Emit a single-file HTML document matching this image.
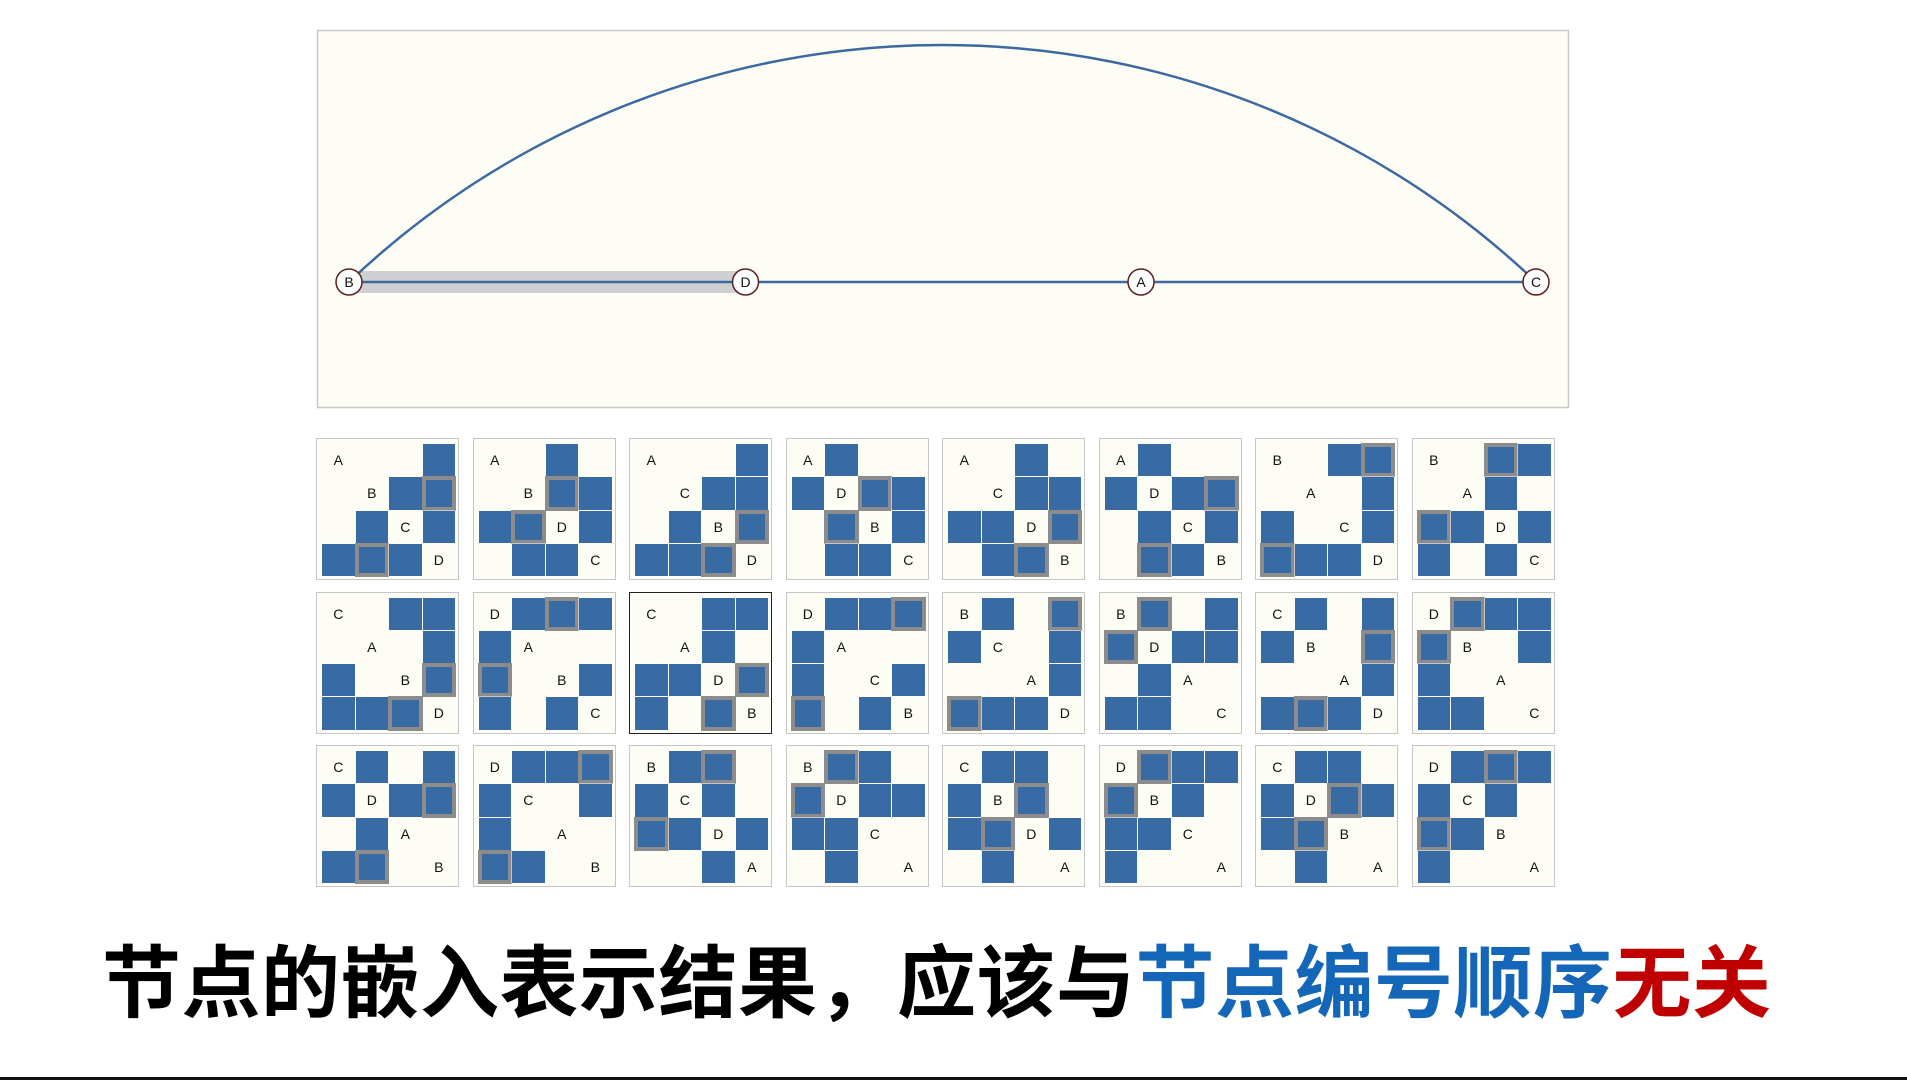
<!DOCTYPE html>
<html><head><meta charset="utf-8"><style>
html,body{margin:0;padding:0;background:#fff;width:1907px;height:1080px;overflow:hidden;position:relative;font-family:"Liberation Sans",sans-serif}
#top{position:absolute;left:0;top:0}
.p{position:absolute;width:143px;height:142px;box-sizing:border-box;border:1px solid #c6c6c6;background:#fdfdf6;padding:5px;display:grid;grid-template-columns:repeat(4,32.5px);grid-template-rows:repeat(4,32.25px);gap:1px}
.p.s{border:1.5px solid #222}
.p i{display:block;position:relative}
.p i.b{background:#386aa4;box-shadow:0 0 0 0.5px #fff}
.p i.g{background:#386aa4;box-shadow:0 0 0 3px #8c8c8c inset;outline:1px solid #8c8c8c}
.p i.l{font-style:normal;font-size:14px;color:#111;display:flex;align-items:center;justify-content:center}
#cap{position:absolute;left:102px;top:938px;font-family:"Liberation Sans","Noto Sans CJK SC",sans-serif;font-weight:700;font-size:79px;line-height:92px;color:#000;white-space:nowrap;letter-spacing:0.5px}
#cap .bl{color:#1466b8}#cap .r{color:#c00000}
#bar{position:absolute;left:0;top:1077px;width:1907px;height:3px;background:#111}
</style></head><body>
<svg id="top" width="1907" height="420">
<rect x="317.5" y="30.5" width="1251" height="377" fill="#fdfdf5" stroke="#c8c8c8" stroke-width="1.5"/>
<rect x="349" y="271" width="397" height="22" fill="#cfcfd1"/>
<path d="M349 282 A861.6 861.6 0 0 1 1536 282" fill="none" stroke="#3c6aa0" stroke-width="2.5"/>
<line x1="349" y1="282" x2="1536" y2="282" stroke="#3c6aa0" stroke-width="2.5"/>
<g fill="#fff" stroke="#5a1f1f" stroke-width="1.5">
<circle cx="349" cy="282" r="13"/><circle cx="745.5" cy="282" r="13"/><circle cx="1141" cy="282" r="13"/><circle cx="1536" cy="282" r="13"/></g>
<g font-family="Liberation Sans" font-size="14" text-anchor="middle" fill="#111">
<text x="349" y="287">B</text><text x="745.5" y="287">D</text><text x="1141" y="287">A</text><text x="1536" y="287">C</text></g>
</svg>

<!-- row 1 -->
<div class="p" style="left:316px;top:438px"><i class="l">A</i><i></i><i></i><i class="b"></i><i></i><i class="l">B</i><i class="b"></i><i class="g"></i><i></i><i class="b"></i><i class="l">C</i><i class="b"></i><i class="b"></i><i class="g"></i><i class="b"></i><i class="l">D</i></div>
<div class="p" style="left:472.5px;top:438px"><i class="l">A</i><i></i><i class="b"></i><i></i><i></i><i class="l">B</i><i class="g"></i><i class="b"></i><i class="b"></i><i class="g"></i><i class="l">D</i><i class="b"></i><i></i><i class="b"></i><i class="b"></i><i class="l">C</i></div>
<div class="p" style="left:629px;top:438px"><i class="l">A</i><i></i><i></i><i class="b"></i><i></i><i class="l">C</i><i class="b"></i><i class="b"></i><i></i><i class="b"></i><i class="l">B</i><i class="g"></i><i class="b"></i><i class="b"></i><i class="g"></i><i class="l">D</i></div>
<div class="p" style="left:785.5px;top:438px"><i class="l">A</i><i class="b"></i><i></i><i></i><i class="b"></i><i class="l">D</i><i class="g"></i><i class="b"></i><i></i><i class="g"></i><i class="l">B</i><i class="b"></i><i></i><i class="b"></i><i class="b"></i><i class="l">C</i></div>
<div class="p" style="left:942px;top:438px"><i class="l">A</i><i></i><i class="b"></i><i></i><i></i><i class="l">C</i><i class="b"></i><i class="b"></i><i class="b"></i><i class="b"></i><i class="l">D</i><i class="g"></i><i></i><i class="b"></i><i class="g"></i><i class="l">B</i></div>
<div class="p" style="left:1098.5px;top:438px"><i class="l">A</i><i class="b"></i><i></i><i></i><i class="b"></i><i class="l">D</i><i class="b"></i><i class="g"></i><i></i><i class="b"></i><i class="l">C</i><i class="b"></i><i></i><i class="g"></i><i class="b"></i><i class="l">B</i></div>
<div class="p" style="left:1255px;top:438px"><i class="l">B</i><i></i><i class="b"></i><i class="g"></i><i></i><i class="l">A</i><i></i><i class="b"></i><i class="b"></i><i></i><i class="l">C</i><i class="b"></i><i class="g"></i><i class="b"></i><i class="b"></i><i class="l">D</i></div>
<div class="p" style="left:1411.5px;top:438px"><i class="l">B</i><i></i><i class="g"></i><i class="b"></i><i></i><i class="l">A</i><i class="b"></i><i></i><i class="g"></i><i class="b"></i><i class="l">D</i><i class="b"></i><i class="b"></i><i></i><i class="b"></i><i class="l">C</i></div>

<!-- row 2 -->
<div class="p" style="left:316px;top:591.5px"><i class="l">C</i><i></i><i class="b"></i><i class="b"></i><i></i><i class="l">A</i><i></i><i class="b"></i><i class="b"></i><i></i><i class="l">B</i><i class="g"></i><i class="b"></i><i class="b"></i><i class="g"></i><i class="l">D</i></div>
<div class="p" style="left:472.5px;top:591.5px"><i class="l">D</i><i class="b"></i><i class="g"></i><i class="b"></i><i class="b"></i><i class="l">A</i><i></i><i></i><i class="g"></i><i></i><i class="l">B</i><i class="b"></i><i class="b"></i><i></i><i class="b"></i><i class="l">C</i></div>
<div class="p s" style="left:629px;top:591.5px"><i class="l">C</i><i></i><i class="b"></i><i class="b"></i><i></i><i class="l">A</i><i class="b"></i><i></i><i class="b"></i><i class="b"></i><i class="l">D</i><i class="g"></i><i class="b"></i><i></i><i class="g"></i><i class="l">B</i></div>
<div class="p" style="left:785.5px;top:591.5px"><i class="l">D</i><i class="b"></i><i class="b"></i><i class="g"></i><i class="b"></i><i class="l">A</i><i></i><i></i><i class="b"></i><i></i><i class="l">C</i><i class="b"></i><i class="g"></i><i></i><i class="b"></i><i class="l">B</i></div>
<div class="p" style="left:942px;top:591.5px"><i class="l">B</i><i class="b"></i><i></i><i class="g"></i><i class="b"></i><i class="l">C</i><i></i><i class="b"></i><i></i><i></i><i class="l">A</i><i class="b"></i><i class="g"></i><i class="b"></i><i class="b"></i><i class="l">D</i></div>
<div class="p" style="left:1098.5px;top:591.5px"><i class="l">B</i><i class="g"></i><i></i><i class="b"></i><i class="g"></i><i class="l">D</i><i class="b"></i><i class="b"></i><i></i><i class="b"></i><i class="l">A</i><i></i><i class="b"></i><i class="b"></i><i></i><i class="l">C</i></div>
<div class="p" style="left:1255px;top:591.5px"><i class="l">C</i><i class="b"></i><i></i><i class="b"></i><i class="b"></i><i class="l">B</i><i></i><i class="g"></i><i></i><i></i><i class="l">A</i><i class="b"></i><i class="b"></i><i class="g"></i><i class="b"></i><i class="l">D</i></div>
<div class="p" style="left:1411.5px;top:591.5px"><i class="l">D</i><i class="g"></i><i class="b"></i><i class="b"></i><i class="g"></i><i class="l">B</i><i></i><i class="b"></i><i class="b"></i><i></i><i class="l">A</i><i></i><i class="b"></i><i class="b"></i><i></i><i class="l">C</i></div>

<!-- row 3 -->
<div class="p" style="left:316px;top:745px"><i class="l">C</i><i class="b"></i><i></i><i class="b"></i><i class="b"></i><i class="l">D</i><i class="b"></i><i class="g"></i><i></i><i class="b"></i><i class="l">A</i><i></i><i class="b"></i><i class="g"></i><i></i><i class="l">B</i></div>
<div class="p" style="left:472.5px;top:745px"><i class="l">D</i><i class="b"></i><i class="b"></i><i class="g"></i><i class="b"></i><i class="l">C</i><i></i><i class="b"></i><i class="b"></i><i></i><i class="l">A</i><i></i><i class="g"></i><i class="b"></i><i></i><i class="l">B</i></div>
<div class="p" style="left:629px;top:745px"><i class="l">B</i><i class="b"></i><i class="g"></i><i></i><i class="b"></i><i class="l">C</i><i class="b"></i><i></i><i class="g"></i><i class="b"></i><i class="l">D</i><i class="b"></i><i></i><i></i><i class="b"></i><i class="l">A</i></div>
<div class="p" style="left:785.5px;top:745px"><i class="l">B</i><i class="g"></i><i class="b"></i><i></i><i class="g"></i><i class="l">D</i><i class="b"></i><i class="b"></i><i class="b"></i><i class="b"></i><i class="l">C</i><i></i><i></i><i class="b"></i><i></i><i class="l">A</i></div>
<div class="p" style="left:942px;top:745px"><i class="l">C</i><i class="b"></i><i class="b"></i><i></i><i class="b"></i><i class="l">B</i><i class="g"></i><i></i><i class="b"></i><i class="g"></i><i class="l">D</i><i class="b"></i><i></i><i class="b"></i><i></i><i class="l">A</i></div>
<div class="p" style="left:1098.5px;top:745px"><i class="l">D</i><i class="g"></i><i class="b"></i><i class="b"></i><i class="g"></i><i class="l">B</i><i class="b"></i><i></i><i class="b"></i><i class="b"></i><i class="l">C</i><i></i><i class="b"></i><i></i><i></i><i class="l">A</i></div>
<div class="p" style="left:1255px;top:745px"><i class="l">C</i><i class="b"></i><i class="b"></i><i></i><i class="b"></i><i class="l">D</i><i class="g"></i><i class="b"></i><i class="b"></i><i class="g"></i><i class="l">B</i><i></i><i></i><i class="b"></i><i></i><i class="l">A</i></div>
<div class="p" style="left:1411.5px;top:745px"><i class="l">D</i><i class="b"></i><i class="g"></i><i class="b"></i><i class="b"></i><i class="l">C</i><i class="b"></i><i></i><i class="g"></i><i class="b"></i><i class="l">B</i><i></i><i class="b"></i><i></i><i></i><i class="l">A</i></div>

<div id="cap">节点的嵌入表示结果，应该与<span class="bl">节点编号顺序</span><span class="r">无关</span></div>
<div id="bar"></div>
</body></html>
